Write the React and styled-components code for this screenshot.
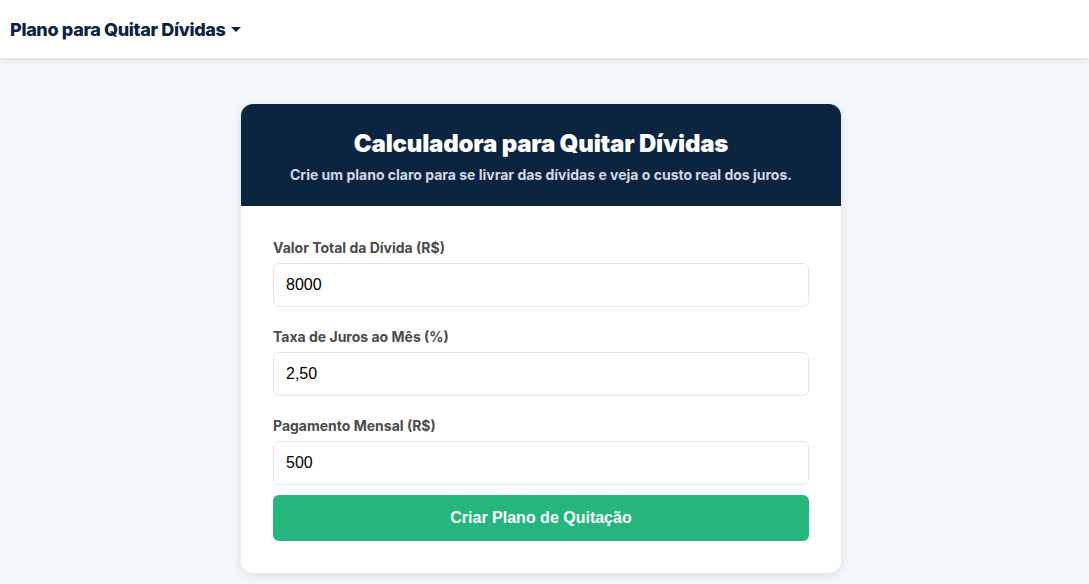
import React, { useState } from "react";
import styled, { createGlobalStyle } from "styled-components";

const GlobalStyle = createGlobalStyle`
  * { box-sizing: border-box; }
  body {
    margin: 0;
    background: #f4f7fa;
    font-family: Inter, "Noto Sans", sans-serif;
  }
`;

const Navbar = styled.nav`
  height: 58px;
  background: #ffffff;
  box-shadow: 0 2px 6px rgba(15, 30, 60, 0.12);
  display: flex;
  align-items: center;
  padding: 0 10px;
`;

const Brand = styled.button`
  display: flex;
  align-items: center;
  gap: 5px;
  border: none;
  background: none;
  padding: 0;
  font-family: Inter, sans-serif;
  font-size: 18px;
  font-weight: 800;
  color: #0b2540;
  letter-spacing: -0.35px;
  cursor: pointer;
`;

const Caret = styled.span`
  width: 0;
  height: 0;
  border-left: 5px solid transparent;
  border-right: 5px solid transparent;
  border-top: 5px solid #0b2540;
  margin-top: 1px;
`;

const Main = styled.main`
  display: flex;
  justify-content: center;
  padding: 46px 23px 40px 16px;
`;

const Card = styled.section`
  width: 600px;
  background: #ffffff;
  border-radius: 12px;
  overflow: hidden;
  box-shadow: 0 2px 8px rgba(15, 30, 60, 0.12);
`;

const CardHeader = styled.header`
  background: #0b2540;
  height: 102px;
  display: flex;
  flex-direction: column;
  align-items: center;
  justify-content: center;
  padding-top: 2px;
  text-align: center;
`;

const Title = styled.h1`
  margin: 0;
  font-size: 24px;
  font-weight: 900;
  color: #ffffff;
  letter-spacing: -0.2px;
`;

const Subtitle = styled.p`
  margin: 8px 0 0;
  font-size: 14px;
  font-weight: 700;
  color: #d3d9e2;
`;

const Form = styled.form`
  padding: 33px 32px 32px;
  display: flex;
  flex-direction: column;
`;

const Field = styled.div`
  display: flex;
  flex-direction: column;
  margin-bottom: ${(p) => (p.$last ? "10px" : "21px")};
`;

const Label = styled.label`
  font-size: 14px;
  font-weight: 700;
  color: #4b4b4b;
  margin-bottom: 7px;
`;

const Input = styled.input`
  height: 44px;
  border: 1px solid #e2e6ec;
  border-radius: 6px;
  padding: 0 12px;
  font-family: "Liberation Sans", Arial, sans-serif;
  font-size: 16px;
  color: #000;
  outline: none;
`;

const SubmitButton = styled.button`
  height: 46px;
  border: none;
  border-radius: 6px;
  background: #25b67d;
  color: #ffffff;
  font-family: "Liberation Sans", Arial, sans-serif;
  font-size: 16px;
  font-weight: 700;
  cursor: pointer;
`;

const fields = [
  { id: "total", label: "Valor Total da Dívida (R$)", value: "8000" },
  { id: "juros", label: "Taxa de Juros ao Mês (%)", value: "2,50" },
  { id: "mensal", label: "Pagamento Mensal (R$)", value: "500" },
];

export default function App() {
  const [values, setValues] = useState(
    Object.fromEntries(fields.map((f) => [f.id, f.value]))
  );

  return (
    <>
      <GlobalStyle />
      <Navbar>
        <Brand type="button">
          Plano para Quitar Dívidas
          <Caret />
        </Brand>
      </Navbar>
      <Main>
        <Card>
          <CardHeader>
            <Title>Calculadora para Quitar Dívidas</Title>
            <Subtitle>
              Crie um plano claro para se livrar das dívidas e veja o custo real dos juros.
            </Subtitle>
          </CardHeader>
          <Form onSubmit={(e) => e.preventDefault()}>
            {fields.map((f, i) => (
              <Field key={f.id} $last={i === fields.length - 1}>
                <Label htmlFor={f.id}>{f.label}</Label>
                <Input
                  id={f.id}
                  value={values[f.id]}
                  onChange={(e) => setValues({ ...values, [f.id]: e.target.value })}
                />
              </Field>
            ))}
            <SubmitButton type="submit">Criar Plano de Quitação</SubmitButton>
          </Form>
        </Card>
      </Main>
    </>
  );
}
